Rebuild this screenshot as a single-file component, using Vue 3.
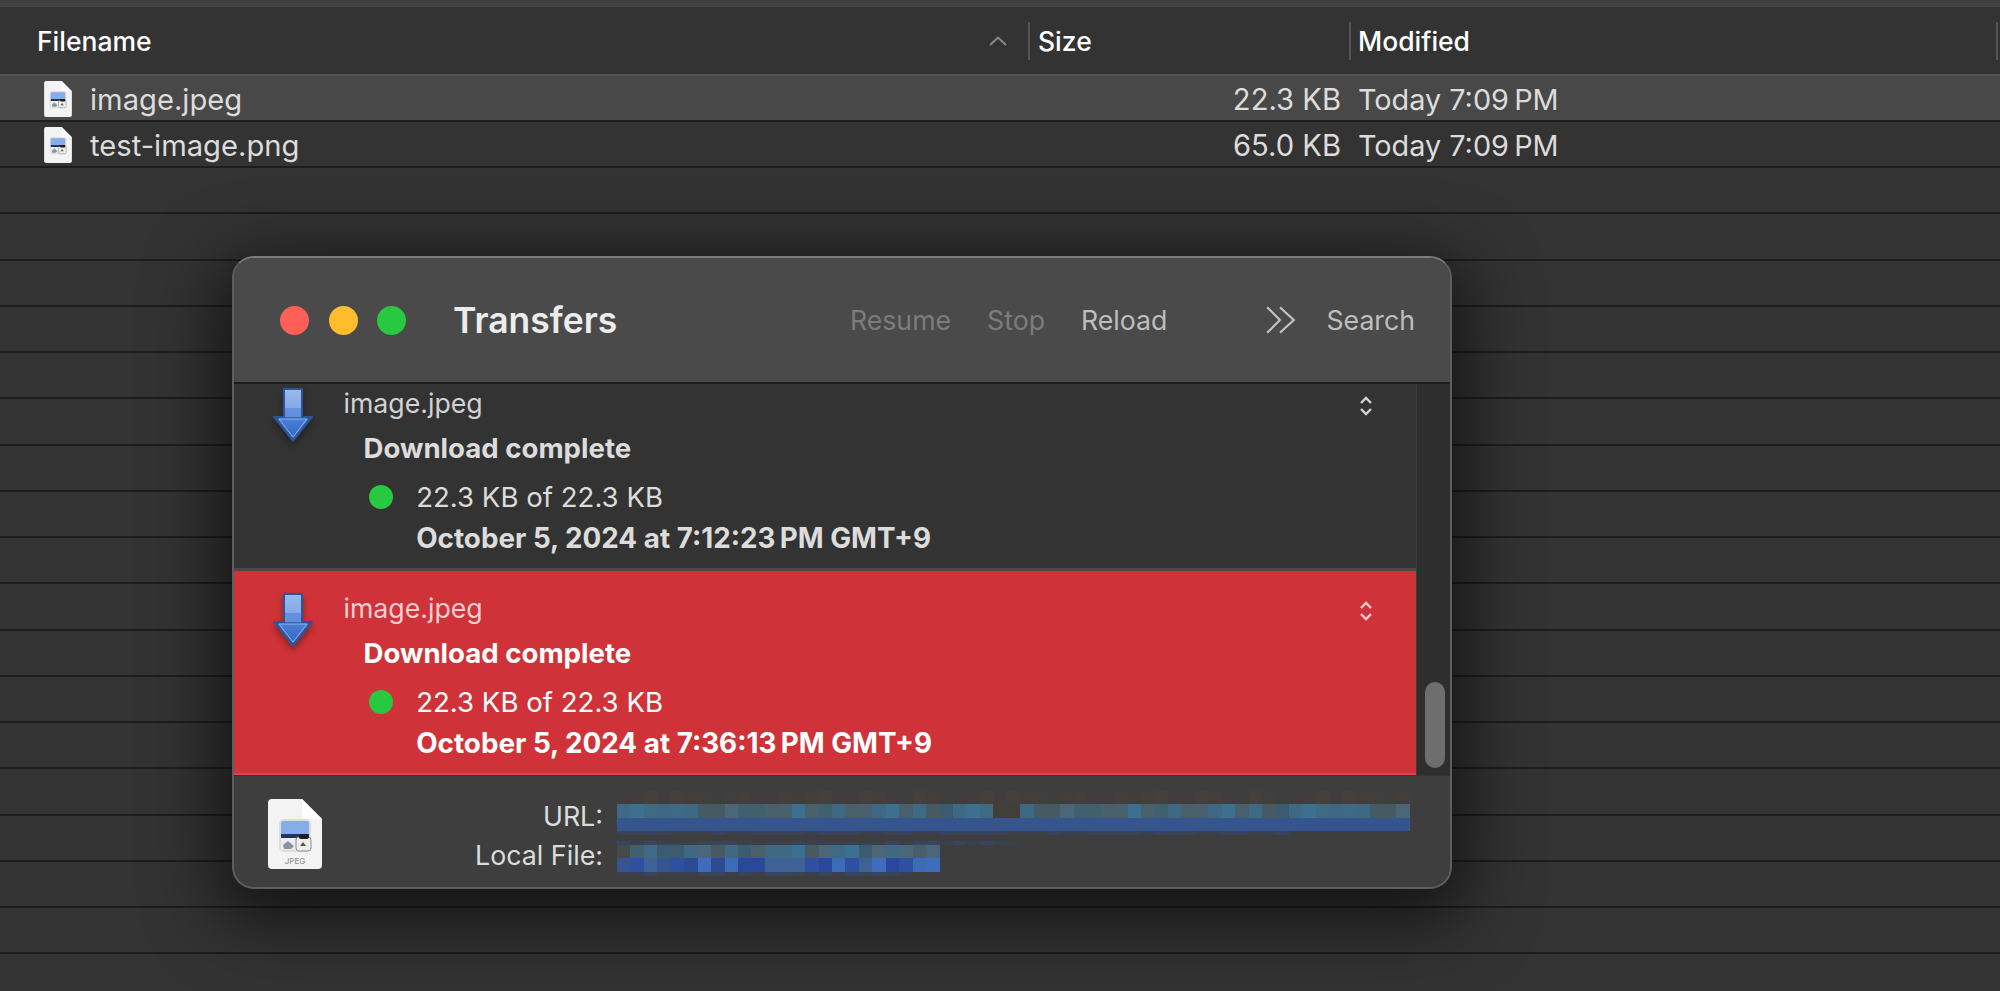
<template>
  <div class="finder">
    <div class="finder-top"></div>
    <div class="columns">
      <div class="col col-name">
        <span>Filename</span>
        <svg class="sort" viewBox="0 0 20 10" width="20" height="10"><path d="M2 9 10 1.5 18 9" /></svg>
      </div>
      <div class="col col-size">Size</div>
      <div class="col col-date">Modified</div>
    </div>
    <div class="file-row" v-for="(file, index) in rows" :key="index" :class="{ selected: index === 0 }">
      <template v-if="file">
        <div class="file-name">
          <svg class="doc-small" viewBox="0 0 54 70" width="30" height="36"><use href="#doc" /></svg>
          {{ file.name }}
        </div>
        <div class="file-size">{{ file.size }}</div>
        <div class="file-date">{{ file.date }}</div>
      </template>
    </div>

    <svg class="defs" width="0" height="0">
      <defs>
        <linearGradient id="shaft" x1="0" y1="0" x2="0" y2="1">
          <stop offset="0" stop-color="#9ab9ee" />
          <stop offset="1" stop-color="#5f8edd" />
        </linearGradient>
        <linearGradient id="head" x1="0" y1="0" x2="0" y2="1">
          <stop offset="0" stop-color="#4a80d8" />
          <stop offset="1" stop-color="#3464bd" />
        </linearGradient>
        <symbol id="doc" viewBox="0 0 54 70">
          <path d="M4 0H34L54 20V66a4 4 0 0 1-4 4H4a4 4 0 0 1-4-4V4a4 4 0 0 1 4-4Z" fill="#f3f3f3" />
          <path d="M34 0 54 20H39a5 5 0 0 1-5-5Z" fill="#fff" />
          <rect x="11" y="20" width="32" height="33" rx="5" fill="#dcdcdc" />
          <rect x="13" y="22" width="28" height="14" rx="2" fill="#86ade9" />
          <rect x="13" y="35" width="28" height="4" fill="#23365c" />
          <rect x="13" y="39" width="28" height="12" fill="#e9edf2" />
          <path d="M15 46l5-4 6 5-3 3h-7Z" fill="#8b929b" />
          <rect x="28" y="38" width="15" height="14" rx="3" fill="#ededed" stroke="#8c8c8c" />
          <rect x="31" y="35" width="10" height="5" rx="2" fill="#1d1d1d" />
          <path d="M32 47l3-4 3 4Z" fill="#555" />
        </symbol>
        <symbol id="arrow" viewBox="0 0 42 56">
          <path d="M12 1H30V29H40L21 53 2 29H12Z" fill="url(#shaft)" stroke="#2d5596" stroke-width="2" stroke-linejoin="round" />
          <path d="M4 30H38L21 52Z" fill="url(#head)" stroke="#2d5596" stroke-width="1.5" stroke-linejoin="round" />
          <path d="M7 31H35L21 49Z" fill="none" stroke="#8db0ea" stroke-width="1" />
          <path d="M13 20H29V29H13Z" fill="#4a80d8" opacity="0.55" />
        </symbol>
      </defs>
    </svg>

    <div class="window">
      <div class="titlebar">
        <div class="lights">
          <span class="light red"></span>
          <span class="light yellow"></span>
          <span class="light green"></span>
        </div>
        <div class="title">Transfers</div>
        <div class="tools">
          <span class="tool off">Resume</span>
          <span class="tool off">Stop</span>
          <span class="tool">Reload</span>
          <svg class="more" viewBox="0 0 30 28" width="32" height="30">
            <path d="M2 2 14 14 2 26M14 2 27 14 14 26" />
          </svg>
          <span class="tool search">Search</span>
        </div>
      </div>

      <div class="list-wrap">
        <div class="list">
          <div class="item" v-for="item in items" :key="item.date" :class="{ active: item.active }">
            <svg class="arrow" viewBox="0 0 42 56" width="42" height="56"><use href="#arrow" /></svg>
            <div class="item-body">
              <div class="item-name">image.jpeg</div>
              <div class="item-status">Download complete</div>
              <div class="item-size"><span class="dot"></span>22.3 KB of 22.3 KB</div>
              <div class="item-date">{{ item.date }}</div>
            </div>
            <svg class="updown" viewBox="0 0 14 20" width="14" height="20">
              <path d="M2 7 7 2 12 7M2 13 7 18 12 13" />
            </svg>
          </div>
        </div>
        <div class="scroller"><div class="thumb"></div></div>
      </div>

      <div class="details">
        <svg class="doc-large" viewBox="0 0 54 70" width="54" height="70">
          <use href="#doc" />
          <text x="27" y="65" text-anchor="middle" class="doc-label">JPEG</text>
        </svg>
        <div class="fields">
          <div class="label">URL:</div>
          <div class="blur url-blur">
            <div class="blur-row" v-for="(row, r) in urlBlur" :key="r" :class="row.type">
              <span v-for="(c, i) in row.cells" :key="i" :style="{ background: c }"></span>
            </div>
          </div>
          <div class="label">Local File:</div>
          <div class="blur file-blur">
            <div class="blur-row" v-for="(row, r) in fileBlur" :key="r" :class="row.type">
              <span v-for="(c, i) in row.cells" :key="i" :style="{ background: c }"></span>
            </div>
          </div>
        </div>
      </div>
    </div>
  </div>
</template>

<script setup>
const rows = Array.from({ length: 20 }, () => null)
rows[0] = { name: 'image.jpeg', size: '22.3 KB', date: 'Today 7:09\u202fPM' }
rows[1] = { name: 'test-image.png', size: '65.0 KB', date: 'Today 7:09\u202fPM' }

const items = [
  { date: 'October 5, 2024 at 7:12:23\u202fPM GMT+9', active: false },
  { date: 'October 5, 2024 at 7:36:13\u202fPM GMT+9', active: true },
]

// censored text in the footer, a mosaic of small squares
const teal = ['#41606f', '#3f6882', '#47606b', '#3c5a70', '#4a6678', '#3d6f90', '#465a62', '#3f6a84']
const blue = ['#2f50a0', '#3458a8', '#2b4b92', '#3a6cb8', '#3f6296', '#2a479e', '#3d6dbc', '#36558f']
const brown = ['#443f3d', '#423e3c', '#45403e', '#3f3e3e', '#403d3c']
const navy = ['#3a4358', '#3b4050', '#3d4048', '#394462']

function mosaic(palette, count, seed) {
  let n = seed
  return Array.from({ length: count }, () => {
    n = (n * 31 + 17) % 101
    return palette[n % palette.length]
  })
}

const urlBlur = [
  { type: 'high', cells: mosaic(brown, 59, 3) },
  { type: 'tall', cells: mosaic(teal, 59, 11).map((c, i) => (i === 28 || i === 29 ? '#423f3b' : c)) },
  { type: 'tall', cells: mosaic(blue, 59, 23) },
  { type: 'thin', cells: mosaic(navy, 50, 7) },
]
const fileBlur = [
  { type: 'thin', cells: mosaic(navy, 30, 5) },
  { type: 'tall', cells: mosaic(teal, 24, 13).map((c, i) => (i === 0 ? '#444a48' : c)) },
  { type: 'tall', cells: mosaic(blue, 24, 29) },
  { type: 'thin', cells: mosaic(navy, 22, 9) },
]
</script>

<style>
html,
body {
  margin: 0;
  background: #333;
  overflow: hidden;
}
</style>

<style scoped>
.finder {
  position: relative;
  width: 2000px;
  height: 991px;
  overflow: hidden;
  background: #333;
  font-family: Inter, "Liberation Sans", sans-serif;
}

.defs {
  position: absolute;
}

.finder-top {
  height: 7px;
  background: #404040;
  border-bottom: 1px solid #484848;
  box-sizing: border-box;
}

.columns {
  display: flex;
  height: 64.5px;
  padding-top: 2px;
  align-items: center;
  color: #fff;
  font-size: 26.5px;
  font-weight: 500;
}

.col {
  height: 38px;
  display: flex;
  align-items: center;
  box-sizing: border-box;
}

.col-name {
  width: 1028px;
  padding: 0 20px 0 37px;
  justify-content: space-between;
}

.sort {
  fill: none;
  stroke: #8a8a8a;
  stroke-width: 2;
}

.col-size {
  width: 321px;
  padding-left: 8px;
  border-left: 2px solid #555;
}

.col-date {
  width: 649px;
  padding-left: 7px;
  border-left: 2px solid #555;
  border-right: 2px solid #555;
}

.file-row {
  display: flex;
  align-items: center;
  height: 46.25px;
  padding-top: 3px;
  box-sizing: border-box;
  border-bottom: 2px solid #1d1d1d;
  color: #dcdcdc;
  font-size: 29.2px;
}

.file-row.selected {
  height: 48.25px;
  background: #484848;
  border-top: 2px solid #555;
}

.file-name {
  display: flex;
  align-items: center;
  gap: 17px;
  width: 1030px;
  padding-left: 43px;
  box-sizing: border-box;
  white-space: nowrap;
}

.file-size {
  width: 311px;
  text-align: right;
}

.file-date {
  margin-left: 17px;
  font-size: 28.8px;
}

.window {
  position: absolute;
  left: 232px;
  top: 256px;
  width: 1220px;
  height: 633px;
  box-sizing: border-box;
  border: 2px solid #5e5e5e;
  border-top-color: #7c7c7c;
  border-radius: 22px;
  overflow: hidden;
  display: flex;
  flex-direction: column;
  background: #3e3e3e;
  box-shadow: 0 18px 70px 14px rgba(0, 0, 0, 0.62);
}

.titlebar {
  display: flex;
  align-items: center;
  height: 126px;
  flex-shrink: 0;
  padding: 0 35px 0 46px;
  background: #4a4a4a;
  border-bottom: 2px solid #1c1c1c;
  box-sizing: border-box;
}

.lights {
  display: flex;
  gap: 19.5px;
}

.light {
  width: 29px;
  height: 29px;
  border-radius: 50%;
}

.light.red {
  background: #fe5f57;
}

.light.yellow {
  background: #febc2e;
}

.light.green {
  background: #28c840;
}

.title {
  margin-left: 47px;
  font-size: 35.5px;
  font-weight: 600;
  color: #ececec;
}

.tools {
  margin-left: auto;
  display: flex;
  align-items: center;
  gap: 36px;
  font-size: 26.7px;
  color: #bebebe;
}

.tool.off {
  color: #7c7c7c;
}

.more {
  margin-left: 62px;
  fill: none;
  stroke: #c4c4c4;
  stroke-width: 2;
}

.search {
  margin-left: -7px;
}

.list-wrap {
  position: relative;
  height: 391px;
  flex-shrink: 0;
  overflow: hidden;
  background: #333;
}

.list {
  width: 1184px;
  margin-top: -18px;
}

.item {
  display: flex;
  position: relative;
  height: 205px;
  box-sizing: border-box;
  padding: 22px 0 0 37.5px;
  border-bottom: 3px solid #4a4a4a;
  color: #dcdcdc;
  font-size: 27.6px;
}

.item.active {
  background: #cf3339;
  border-bottom-color: #e0454c;
  color: #fff;
}

.arrow {
  flex-shrink: 0;
  filter: drop-shadow(0 4px 3px rgba(0, 0, 0, 0.35));
}

.item-body {
  margin-left: 30px;
  margin-top: -1px;
}

.item-name {
  line-height: 32px;
  font-size: 26.7px;
  color: #d2d2d2;
}

.active .item-name {
  color: #f6cfd1;
}

.item-status {
  margin: 12.5px 0 0 20px;
  line-height: 32px;
  font-weight: 700;
}

.item-size {
  display: flex;
  align-items: center;
  margin: 17px 0 0 25.5px;
  line-height: 32px;
}

.dot {
  width: 24px;
  height: 24px;
  margin-right: 23.2px;
  border-radius: 50%;
  background: #28c840;
}

.item-date {
  margin: 9px 0 0 72.7px;
  line-height: 32px;
  font-weight: 700;
  font-size: 27.8px;
  white-space: nowrap;
}

.updown {
  position: absolute;
  left: 1125px;
  top: 30px;
  fill: none;
  stroke: #d2d2d2;
  stroke-width: 2.4;
}

.active .updown {
  stroke: #f6cfd1;
}

.scroller {
  position: absolute;
  top: 0;
  right: 0;
  bottom: 0;
  width: 34px;
  background: #2e2e2e;
  border-left: 1px solid #3c3c3c;
  box-sizing: border-box;
}

.thumb {
  position: absolute;
  left: 8px;
  bottom: 7px;
  width: 20px;
  height: 86px;
  border-radius: 10px;
  background: #6e6e6e;
}

.details {
  display: flex;
  flex: 1;
  padding: 23px 0 0 34px;
  border-top: 1px solid #333;
}

.doc-label {
  font-size: 8px;
  fill: #8c8c8c;
}

.fields {
  display: grid;
  grid-template-columns: 281px 1fr;
  grid-template-rows: 38.5px 38.5px;
  column-gap: 14px;
  font-size: 26.8px;
  color: #dcdcdc;
  margin-top: -2px;
}

.label {
  text-align: right;
  line-height: 39px;
}

.blur {
  display: flex;
  flex-direction: column;
}

.url-blur {
  margin-top: -6.5px;
}

.file-blur {
  margin-top: 5px;
}

.blur-row {
  display: flex;
  flex-shrink: 0;
}

.blur-row span {
  width: 13.45px;
}

.high,
.tall {
  height: 13.5px;
}

.thin {
  height: 4px;
}
</style>
